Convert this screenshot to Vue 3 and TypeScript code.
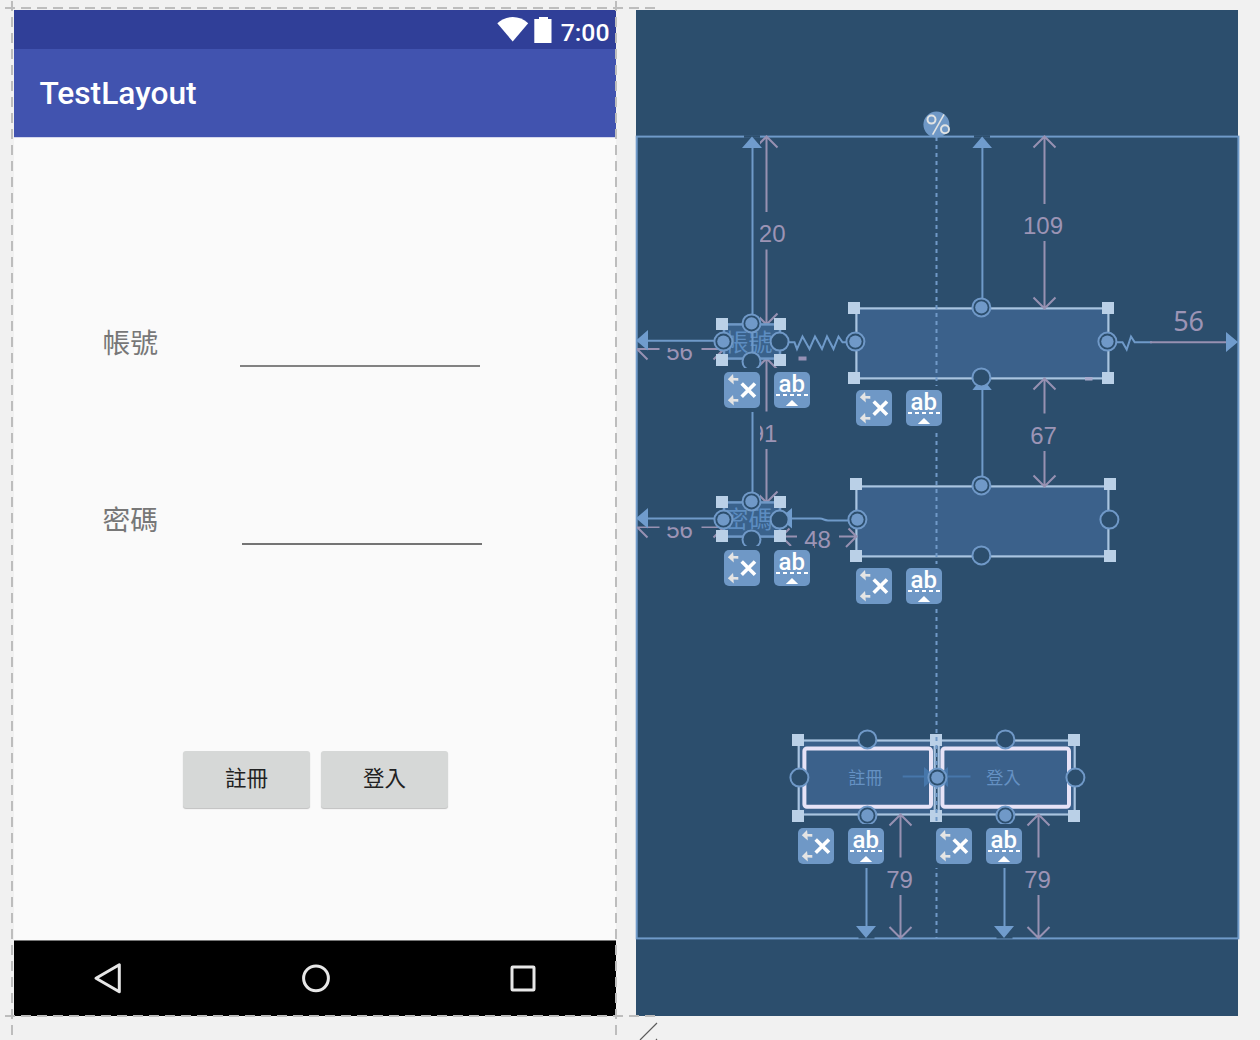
<script setup lang="ts">
interface Circle { x: number; y: number; on: boolean }
interface Span { d: string }
interface Label { x: number; y: number; text: string }

// Filled circles are connected anchors, empty ones are free.
const circles: Circle[] = [
  { x: 751.5, y: 323.4, on: true },
  { x: 723.4, y: 341.6, on: true },
  { x: 779.6, y: 341.6, on: false },
  { x: 751.5, y: 501.4, on: true },
  { x: 723.4, y: 519.6, on: true },
  { x: 779.6, y: 519.6, on: false },
  { x: 981.4, y: 307.4, on: true },
  { x: 855.4, y: 341.6, on: true },
  { x: 1107.4, y: 341.6, on: true },
  { x: 981.4, y: 377.4, on: false },
  { x: 981.4, y: 485.4, on: true },
  { x: 857.4, y: 519.6, on: true },
  { x: 1109.4, y: 519.6, on: false },
  { x: 981.4, y: 555.4, on: false },
  { x: 867.4, y: 739.4, on: false },
  { x: 1005.4, y: 739.4, on: false },
  { x: 799.4, y: 777.6, on: false },
  { x: 937.4, y: 777.6, on: true },
  { x: 1075.4, y: 777.6, on: false },
]

const handles: [number, number][] = [
  [716, 318], [774, 318], [716, 354], [774, 354],
  [716, 496], [774, 496], [716, 530], [774, 530],
  [848, 302], [1102, 302], [848, 372], [1102, 372],
  [850, 478], [1104, 478], [850, 550], [1104, 550],
  [792, 734], [930, 734], [1068, 734],
  [792, 810], [930, 810], [1068, 810],
]

const tools: [number, number, number][] = [
  [724, 774, 372], [724, 774, 550], [856, 906, 390],
  [856, 906, 568], [798, 848, 828], [936, 986, 828],
]

const margins: Span[] = [
  { d: 'M1044.5 137V204M1044.5 241V308M1033.5 147.5l11-11 11 11M1033.5 297.5l11 11 11-11' },
  { d: 'M1044.5 379V413.5M1044.5 451V487M1033.5 389.5l11-11 11 11M1033.5 475.5l11 11 11-11' },
  { d: 'M900.5 815V857.5M900.5 895V938M889.5 825.5l11-11 11 11M889.5 927l11 11 11-11' },
  { d: 'M1038.5 815V857.5M1038.5 895V938M1027.5 825.5l11-11 11 11M1027.5 927l11 11 11-11' },
  { d: 'M783 536.5H797M839 536.5H856M791 546l-9.5-9.5 8-8M846 547l10.5-10.5-8-8' },
]

const labels: Label[] = [
  { x: 1043, y: 234.3, text: '109' },
  { x: 1043.5, y: 444.3, text: '67' },
  { x: 817.5, y: 548.3, text: '48' },
  { x: 899.5, y: 888.3, text: '79' },
  { x: 1037.5, y: 888.3, text: '79' },
]
</script>

<template>
  <div class="editor">
    <section class="phone">
      <header class="status">
        <svg class="wifi" width="32" height="25" viewBox="0 0 32 25"><path d="M.3 6.2Q7 0 15.7 0T31.2 6.2L15.7 24.5z" fill="#fff" /></svg>
        <svg class="battery" width="18" height="26" viewBox="0 0 18 26"><path d="M5 0h9v2h3.5v24H.3V2H5z" fill="#fff" /></svg>
        <span class="clock">7:00</span>
      </header>
      <div class="appbar"><span>TestLayout</span></div>
      <main class="content">
        <div class="field first"><label>帳號</label><i class="line"></i></div>
        <div class="field second"><label>密碼</label><i class="line"></i></div>
        <div class="buttons">
          <button>註冊</button>
          <button>登入</button>
        </div>
      </main>
      <nav class="navbar">
        <svg width="30" height="32" viewBox="0 0 30 32"><path d="M3 16.3 26.300 2.800V29.800z" /></svg>
        <svg width="30" height="32" viewBox="0 0 30 32"><circle cx="15" cy="16.3" r="12.4" /></svg>
        <svg width="30" height="32" viewBox="0 0 30 32"><rect x="4" y="5" width="22" height="23" rx=".7" /></svg>
      </nav>
    </section>

    <svg class="blueprint" width="602" height="1006" viewBox="636 10 602 1006">
      <defs>
        <clipPath id="right-of-line"><rect x="760" y="130" width="60" height="390" /></clipPath>
        <clipPath id="below-account"><rect x="630" y="348" width="100" height="30" /></clipPath>
        <clipPath id="below-password"><rect x="630" y="526.5" width="100" height="30" /></clipPath>
        <g id="tool-clear">
          <rect width="36" height="36" rx="5" fill="#6f98c6" />
          <g fill="#e4e4e4">
            <path d="M3.800 7.300 9 2 9.500 6 14.300 6V8.800L9.500 8.600 9.800 12.600z" />
            <path d="M3.800 28.300 9 23 9.500 27 14.300 27V29.800L9.500 29.600 9.800 33.600z" />
          </g>
          <path d="M17.7 11.5 31 24.700M31 11.500 17.700 24.700" stroke="#fff" stroke-width="3.600" />
        </g>
        <g id="tool-baseline">
          <rect width="36" height="36" rx="5" fill="#6f98c6" />
          <path d="M2 23H34" stroke="#fff" stroke-width="2" stroke-dasharray="4 3" />
          <path d="M11.8 34 18 28l6.200 6z" fill="#fff" />
        </g>
      </defs>

      <rect x="636" y="10" width="602" height="1006" fill="#2c4e6d" />
      <rect class="wire" x="636.7" y="136.6" width="601.7" height="801.8" />
      <path d="M744 136.5h16M974 136.5h16M858.5 937.3h16M996.5 937.3h16" stroke="#2c4e6d" stroke-width="2.4" />

      <!-- margin dimensions -->
      <g clip-path="url(#right-of-line)">
        <path class="margin" d="M766.5 137V212M766.5 249.500V324M755.5 147.500l11-11 11 11M755.5 313.500l11 11 11-11" />
        <path class="margin" d="M766.5 359V411.5M766.5 449V502M755.5 369.500l11-11 11 11M755.5 491.500l11 11 11-11" />
        <text class="dim" x="765.500" y="242.300">120</text>
        <text class="dim" x="764" y="442.300">91</text>
      </g>
      <g clip-path="url(#below-account)">
        <path class="margin" d="M637 349H659.500M701.500 349H724M637 349l10.500 10.500M724 349l-10.500 10.500" />
        <text class="dim" x="679.500" y="360.300">56</text>
      </g>
      <g clip-path="url(#below-password)">
        <path class="margin" d="M637 527H659.500M701.500 527H724M637 527l10.500 10.500M724 527l-10.500 10.500" />
        <text class="dim" x="679.500" y="538.300">56</text>
      </g>
      <rect x="798.500" y="356.500" width="8" height="4" fill="#9691b5" />

      <!-- widgets -->
      <g class="small">
        <rect x="724" y="324.400" width="56" height="34.200" />
        <rect x="724" y="502.400" width="56" height="34.200" />
      </g>
      <text class="ghost" x="724.500" y="350.500">帳號</text>
      <text class="ghost" x="724.500" y="528">密碼</text>
      <g class="big">
        <rect x="856.400" y="308.400" width="252" height="70" />
        <rect x="856.400" y="486.400" width="252" height="70" />
        <rect x="798.700" y="740.500" width="136" height="74" />
        <rect x="938.700" y="740.500" width="136" height="74" />
      </g>
      <path v-for="m in margins" :key="m.d" class="margin" :d="m.d" />
      <text v-for="l in labels" :key="l.text + l.x" class="dim" :x="l.x" :y="l.y">{{ l.text }}</text>
      <rect x="1085" y="377" width="7.500" height="3.500" fill="#a7a9cb" />
      <text class="dim wide" x="1188.600" y="330.500">56</text>

      <g class="outline">
        <rect x="804.400" y="748.400" width="126.600" height="58.400" rx="2.500" />
        <rect x="942.400" y="748.400" width="126.600" height="58.400" rx="2.500" />
      </g>
      <path d="M902.700 776.500H970.500" stroke="#4777ab" stroke-width="2" />
      <path d="M924 767v20l12-10zM948 767v20l-12-10z" fill="#4777ab" />
      <text class="ghost button-text" x="848.300" y="784">註冊</text>
      <text class="ghost button-text" x="986.300" y="784">登入</text>

      <!-- constraints -->
      <path class="wire" d="M752.500 147V501M982.400 147V307M982.400 389V485M866.500 816V927M1004.500 816V927M647 340.700H723M647 518.600H723" />
      <path class="wire" d="M789 342.300H794.500L797 349 802.500 336.500 809.500 349 815 336.500 822 349 827 336.500 833.500 349 838.500 336.500 842.500 342.300H847" />
      <path class="wire" d="M1116 342.300H1122.500L1126.700 349.500 1131 336.500 1134.700 342.300H1152" />
      <path class="margin" d="M1150 342.300H1226" />
      <path class="wire" d="M792 518.600H820C824 519 824 520.300 828 520.400H848" />
      <g class="arrow">
        <path d="M742 148 752 136.500 762 148zM972.400 148l9.800-11.500 9.800 11.500zM972.400 390 982 378 991.800 390z" />
        <path d="M856 926h20l-10 12zM994 926h20l-10 12z" />
        <path d="M636 340.500 648 330v20.500zM636 518.300 648 508v20.500zM1238 342l-12-10v20zM780 518.300 792 508v20.500z" />
      </g>

      <rect v-for="[x, y] in handles" :key="x + '-' + y" :x="x" :y="y" width="12" height="12" fill="#bad0e7" />
      <path d="M936.500 137V938" stroke="#7099c8" stroke-width="2" stroke-dasharray="4 4" />
      <circle cx="936.400" cy="124.600" r="13" fill="#6f98c6" />
      <g fill="none" stroke="#e1e3e3" stroke-width="2">
        <circle cx="931.500" cy="119.600" r="4" />
        <circle cx="945" cy="129.300" r="4" />
        <path d="M944 114.300 932.600 134.700" stroke-width="1.600" />
      </g>

      <g v-for="c in circles" :key="c.x + '-' + c.y">
        <circle class="anchor" :cx="c.x" :cy="c.y" r="9" />
        <circle v-if="c.on" :cx="c.x" :cy="c.y" r="6.200" fill="#7099c8" />
      </g>
      <g>
        <circle class="anchor" cx="751.500" cy="361.400" r="9" />
        <circle class="anchor" cx="751.500" cy="539.400" r="9" />
        <g v-for="x in [867.4, 1005.4]" :key="x">
          <circle class="anchor" :cx="x" cy="815.500" r="9" />
          <circle :cx="x" cy="815.500" r="6.200" fill="#7099c8" />
        </g>
      </g>

      <g v-for="[x1, x2, y] in tools" :key="x1 + '-' + y">
        <rect :x="x1 - 4" :y="y - 4" width="44" height="44" fill="#2c4e6d" />
        <rect :x="x2 - 4" :y="y - 4" width="44" height="44" fill="#2c4e6d" />
        <use href="#tool-clear" :x="x1" :y="y" />
        <use href="#tool-baseline" :x="x2" :y="y" />
        <text class="ab" :x="x2 + 17.8" :y="y + 19.6">ab</text>
      </g>
    </svg>

    <svg class="guides" width="1260" height="1040" viewBox="0 0 1260 1040">
      <path d="M12 1V1035M616 1V1035M5 8H655M5 1016H655" stroke="#bdbdbd" stroke-width="2" stroke-dasharray="10 6" />
      <path d="M640 1040 657 1023M656 1040 657 1039" stroke="#5c5c5c" stroke-width="1.200" />
    </svg>
  </div>
</template>

<style>
body { margin: 0; background: #f1f1f1; }
</style>

<style scoped>
.editor {
  position: relative;
  box-sizing: border-box;
  width: 1260px;
  height: 1040px;
  padding: 10px 0 0 14px;
  display: flex;
  align-items: flex-start;
  gap: 20px;
  background: #f1f1f1;
  overflow: hidden;
  font-family: Roboto, "Noto Sans CJK TC", sans-serif;
}
.phone {
  width: 602px;
  height: 1006px;
  flex: none;
  display: flex;
  flex-direction: column;
  background: #fafafa;
}
.status {
  height: 39px;
  flex: none;
  box-sizing: border-box;
  padding: 7px 6.500px 0 0;
  display: flex;
  justify-content: flex-end;
  align-items: flex-start;
  background: #303f98;
  color: #fff;
}
.battery { margin-left: 5px; }
.clock { margin-left: 9px; font-size: 24.800px; line-height: 31px; font-weight: 500; }
.appbar {
  height: 88px;
  flex: none;
  display: flex;
  align-items: center;
  padding-left: 25.500px;
  background: #4153af;
  color: #fff;
  font-size: 31.700px;
  font-weight: 500;
}
.content {
  flex: 1;
  display: flex;
  flex-direction: column;
  border-top: 1px solid #d3d6ec;
}
.field {
  box-sizing: border-box;
  display: flex;
  align-items: flex-start;
  height: 178px;
  padding-left: 88.500px;
  color: #777;
  font-size: 27.800px;
  line-height: 38px;
}
.field.first { padding-top: 184px; height: 362px; }
.field label { width: 56px; font-family: "Noto Sans CJK TC", sans-serif; }
.line { width: 240px; height: 2px; margin: 43px 0 0 81.500px; background: #828282; }
.second .line { margin-left: 83.500px; height: 1.500px; background: #747474; }
.second label { margin-top: -1px; }
.buttons {
  display: flex;
  gap: 11px;
  margin: 73px 0 0 169px;
}
button {
  width: 127px;
  height: 57px;
  padding: 0 0 6px;
  border: 0;
  border-radius: 3px;
  background: #d6d8d7;
  box-shadow: 0 1px 1px #bfbfbf;
  color: #222;
  font: 21.500px "Noto Sans CJK TC", sans-serif;
}
.navbar {
  height: 73px;
  flex: none;
  border-top: 1px solid #777;
  display: flex;
  justify-content: space-between;
  align-items: center;
  padding: 0 78px 2px 79px;
  background: #000;
}
.navbar svg { fill: none; stroke: #e7e7e7; stroke-width: 3; stroke-linejoin: round; }
.blueprint { flex: none; overflow: visible; }
.wire { fill: none; stroke: #6f9ac9; stroke-width: 2; }
.margin { fill: none; stroke: #9791b2; stroke-width: 2; }
.dim { fill: #9c94b5; font: 24px "Liberation Sans", sans-serif; text-anchor: middle; }
.dim.wide { font: 27px "Noto Sans", sans-serif; }
.small rect { fill: #3a628c; stroke: #6f98c6; stroke-width: 2.500; }
.big rect { fill: #3b618b; stroke: #a9c4e0; stroke-width: 2.200; }
.outline rect { fill: none; stroke: #e7e3f7; stroke-width: 4; }
.ghost { fill: #5d8dc1; font: 24px "Noto Sans CJK TC", sans-serif; }
.ghost.button-text { font-size: 17.200px; fill: #6591c3; }
.arrow { fill: #709ccd; }
.anchor { fill: #2c4e6d; stroke: #7099c8; stroke-width: 2; }
.ab { fill: #fff; font: 500 24px Roboto, sans-serif; text-anchor: middle; }
.guides { position: absolute; left: 0; top: 0; pointer-events: none; }
</style>
